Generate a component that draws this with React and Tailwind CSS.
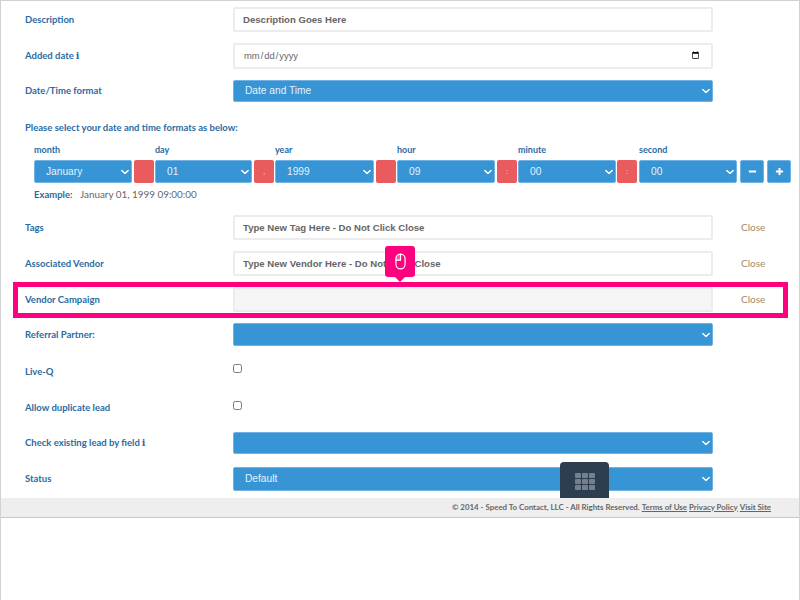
import React from "react";

const labelBase = "font-['Lato',sans-serif] font-bold leading-none text-[#2a6ba3]";
const inputBase = "block w-full h-full rounded-[2px] border-2 border-[#ececec] pl-[8px] font-['Liberation_Sans',sans-serif] outline-none";

function Chevron() {
  return (
    <svg viewBox="0 0 10 6" className="w-[8px] h-[5px]" fill="none" stroke="white" strokeWidth="1.8" strokeLinecap="round" strokeLinejoin="round">
      <path d="M1 1l4 4 4-4" />
    </svg>
  );
}

function BlueSelect({ value, className = "", pad = "pl-[11px]" }) {
  return (
    <div className={`relative ${className}`}>
      <select
        defaultValue={value}
        className={`block appearance-none w-full h-full rounded-[2px] border border-[#6fb2e3] bg-[#3795d6] ${pad} font-['Liberation_Sans',sans-serif] text-[10.2px] text-[#e4f1fa] outline-none`}
      >
        <option value={value || ""}>{value || ""}</option>
      </select>
      <span className="absolute top-1/2 -translate-y-1/2 right-[3px] flex">
        <Chevron />
      </span>
    </div>
  );
}

function Row({ name, info, height, top, children, aside }) {
  return (
    <div className={`flex items-center ${height} ${top}`}>
      <div className={`w-[208px] shrink-0 text-[9.5px] ${labelBase}`}>
        {name}
        {info && <span className="ml-[2px] font-['DejaVu_Serif',serif] font-bold">i</span>}
      </div>
      <div className="w-[480px] h-full shrink-0">{children}</div>
      {aside && <div className="ml-[28px] mb-[2px] font-['Lato',sans-serif] text-[10px] leading-none text-[#a08c68]">{aside}</div>}
    </div>
  );
}

function DatePart({ name, value, width }) {
  return (
    <div className={`flex flex-col ${width}`}>
      <div className={`h-[15px] text-[9px] ${labelBase}`}>{name}</div>
      <BlueSelect value={value} className="h-[23px]" />
    </div>
  );
}

function Sep({ text = "" }) {
  return (
    <div className="self-end w-[20px] h-[23px] rounded-[2px] bg-[#e95b5d] flex items-center justify-center font-['Liberation_Sans',sans-serif] text-[8px] text-[#f9d5d5]">
      {text}
    </div>
  );
}

function IconBtn({ children }) {
  return (
    <div className="self-end w-[24px] h-[23px] rounded-[2px] bg-[#3795d6] border border-[#6fb2e3] flex items-center justify-center">
      {children}
    </div>
  );
}

export default function App() {
  return (
    <div className="relative w-[800px] h-[600px] overflow-hidden bg-white border border-[#d2d2d2] border-b-0">
      <div className="flex flex-col h-[497px] pl-[24px] pt-[6px]">
        <Row name="Description" height="h-[25px]" top="mt-0">
          <input className={`${inputBase} text-[9.6px] font-bold text-[#666]`} defaultValue="Description Goes Here" />
        </Row>
        <Row name="Added date" info height="h-[26px]" top="mt-[11px]">
          <input type="date" className={`${inputBase} pr-[9px] text-[9.4px] text-[#666]`} />
        </Row>
        <Row name="Date/Time format" height="h-[22px]" top="mt-[11px]">
          <BlueSelect value="Date and Time" className="h-full" />
        </Row>

        <div className={`mt-[21px] h-[10px] text-[9.5px] ${labelBase}`}>Please select your date and time formats as below:</div>

        <div className="flex mt-[12px] ml-[9px] h-[38px]">
          <DatePart name="month" value="January" width="w-[98px]" />
          <div className="w-[2px]" />
          <Sep />
          <div className="w-[1px]" />
          <DatePart name="day" value="01" width="w-[97px]" />
          <div className="w-[2px]" />
          <Sep text="," />
          <div className="w-[1px]" />
          <DatePart name="year" value="1999" width="w-[99px]" />
          <div className="w-[2px]" />
          <Sep />
          <div className="w-[1px]" />
          <DatePart name="hour" value="09" width="w-[98px]" />
          <div className="w-[2px]" />
          <Sep text=":" />
          <div className="w-[1px]" />
          <DatePart name="minute" value="00" width="w-[98px]" />
          <div className="w-[1px]" />
          <Sep text=":" />
          <div className="w-[2px]" />
          <DatePart name="second" value="00" width="w-[98px]" />
          <div className="w-[3px]" />
          <IconBtn>
            <svg viewBox="0 0 10 10" className="w-[9px] h-[9px]" fill="none" stroke="white" strokeWidth="2.2"><path d="M1 5h8" /></svg>
          </IconBtn>
          <div className="w-[3px]" />
          <IconBtn>
            <svg viewBox="0 0 10 10" className="w-[9px] h-[9px]" fill="none" stroke="white" strokeWidth="2.2"><path d="M1 5h8M5 1v8" /></svg>
          </IconBtn>
        </div>

        <div className="flex items-center mt-[6px] ml-[9px] h-[11px]">
          <span className={`w-[46px] text-[9.5px] ${labelBase}`}>Example:</span>
          <span className="font-['Lato',sans-serif] text-[9.9px] leading-none text-[#666]">January 01, 1999 09:00:00</span>
        </div>

        <Row name="Tags" height="h-[25px]" top="mt-[15px]" aside="Close">
          <input className={`${inputBase} text-[9.6px] font-bold text-[#666]`} defaultValue="Type New Tag Here - Do Not Click Close" />
        </Row>
        <Row name="Associated Vendor" height="h-[25px]" top="mt-[11px]" aside="Close">
          <input className={`${inputBase} text-[9.6px] font-bold text-[#666]`} defaultValue="Type New Vendor Here - Do Not Click Close" />
        </Row>
        <Row name="Vendor Campaign" height="h-[25px]" top="mt-[11px]" aside="Close">
          <input disabled className={`${inputBase} bg-[#f5f5f5]`} />
        </Row>
        <Row name="Referral Partner:" height="h-[23px]" top="mt-[11px]">
          <BlueSelect className="h-full" />
        </Row>
        <Row name="Live-Q" height="h-[12px]" top="mt-[20px]">
          <input type="checkbox" className="block w-[9px] h-[9px] -translate-y-[2px]" />
        </Row>
        <Row name="Allow duplicate lead" height="h-[12px]" top="mt-[24px]">
          <input type="checkbox" className="block w-[9px] h-[9px] -translate-y-[1px]" />
        </Row>
        <Row name="Check existing lead by field" info height="h-[22px]" top="mt-[18px]">
          <BlueSelect className="h-full" />
        </Row>
        <Row name="Status" height="h-[24px]" top="mt-[13px]">
          <BlueSelect value="Default" className="h-full" />
        </Row>
      </div>

      <footer className="flex items-center justify-end h-[20px] pr-[28px] bg-[#eeeeee] border-b border-[#c8c8c8] font-['Lato',sans-serif] font-bold text-[7.9px] leading-none text-[#666]">
        <span>© 2014 - Speed To Contact, LLC - All Rights Reserved.</span>
        <a className="ml-[2px] underline">Terms of Use</a>
        <a className="ml-[2px] underline">Privacy Policy</a>
        <a className="ml-[2px] underline">Visit Site</a>
      </footer>

      {/* Walkthrough highlight */}
      <div className="absolute left-[12px] top-[281px] w-[775px] h-[36px] border-[5px] border-[#ff007f] pointer-events-none" />

      {/* Walkthrough tooltip */}
      <div className="absolute left-[384px] top-[245px] w-[30px] h-[31px] rounded-[3px] bg-[#ff007f] flex items-center justify-center">
        <svg viewBox="0 0 12 18" className="w-[11px] h-[17px]" fill="none" stroke="white" strokeWidth="1.3">
          <rect x="1" y="1" width="10" height="16" rx="5" />
          <path d="M6 1a5 5 0 0 0-5 5v1.5h5z" fill="white" opacity="0.3" />
          <path d="M6 1v6.5H1.2" />
        </svg>
        <div className="absolute -bottom-[5px] left-1/2 -translate-x-1/2 w-0 h-0 border-x-[5px] border-x-transparent border-t-[5px] border-t-[#ff007f]" />
      </div>

      {/* Dock handle */}
      <div className="absolute left-[559px] top-[461px] w-[49px] h-[36px] rounded-t-[4px] bg-[#2c3e50] flex items-center justify-center pt-[2px]">
        <div className="grid grid-cols-3 gap-[1px]">
          {Array.from({ length: 9 }).map((_, i) => (
            <div key={i} className="w-[6px] h-[5px] rounded-[1px] bg-[#75808f]" />
          ))}
        </div>
      </div>
    </div>
  );
}
